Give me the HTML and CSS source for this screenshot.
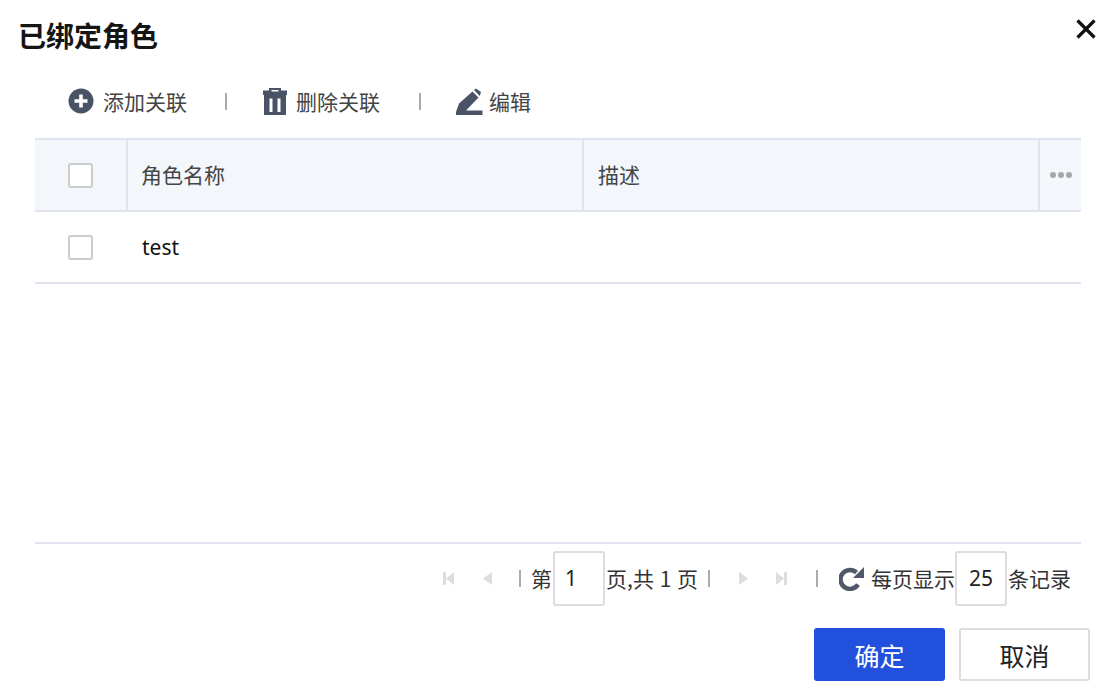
FILE: index.html
```
<!DOCTYPE html>
<html lang="zh">
<head>
<meta charset="utf-8">
<title>已绑定角色</title>
<link rel="stylesheet" href="styles.css">
</head>
<body>
<div class="dialog">
  <header class="head">
    <h1 class="title">已绑定角色</h1>
    <svg class="close" width="22" height="22" viewBox="0 0 22 22"><path d="M2.500 2.500L19.500 19.500M19.500 2.500L2.500 19.500" stroke="#111" stroke-width="3.200" fill="none"/></svg>
  </header>
  <div class="toolbar">
    <span class="tool tool-add">
      <svg width="26" height="26" viewBox="0 0 26 26"><circle cx="13" cy="13" r="12.500" fill="#4a5366"/><path d="M13 6.500V19.500M6.500 13H19.500" stroke="#fff" stroke-width="3.600"/></svg>
      <span>添加关联</span>
    </span>
    <i class="sep sep-a"></i>
    <span class="tool tool-del">
      <svg width="24" height="27" viewBox="0 0 24 27"><path fill-rule="evenodd" d="M6 0H18V2.500H24V7H0V2.500H6ZM8.500 2V3.500H15.500V2Z" fill="#4a5366"/><path fill-rule="evenodd" d="M1 7H23V27H1ZM6.500 10.500V24H9.500V10.500ZM14.500 10.500V24H17.500V10.500Z" fill="#4a5366"/></svg>
      <span>删除关联</span>
    </span>
    <i class="sep sep-b"></i>
    <span class="tool tool-edit">
      <svg width="28" height="27" viewBox="0 0 28 27"><path d="M1 24L4 15.500L17.500 3.500L23.500 9.500L11 22.500H27.500V27H1Z" fill="#4a5366"/><path d="M19 2L21 0.500L26 4L24.700 8Z" fill="#4a5366"/></svg>
      <span>编辑</span>
    </span>
  </div>
  <div class="table">
    <div class="row row-head">
      <div class="cell cell-check"><span class="check"></span></div>
      <div class="cell cell-name">角色名称</div>
      <div class="cell cell-desc">描述</div>
      <div class="cell cell-more"><span class="dot"></span><span class="dot"></span><span class="dot"></span></div>
    </div>
    <div class="row row-body">
      <div class="cell cell-check"><span class="check"></span></div>
      <div class="cell cell-name">test</div>
    </div>
  </div>
  <div class="pager">
    <svg class="pg pg-first" width="13" height="15" viewBox="0 0 13 15"><path d="M1 1H4V14H1ZM12 1V14L4 7.500Z" fill="#dcdde0"/></svg>
    <svg class="pg pg-prev" width="11" height="15" viewBox="0 0 11 15"><path d="M10 1V14L1 7.500Z" fill="#dcdde0"/></svg>
    <i class="sep pg-sep1"></i>
    <span class="lbl lbl-di">第</span>
    <span class="num num-page">1</span>
    <span class="lbl lbl-total">页,共 1 页</span>
    <i class="sep pg-sep2"></i>
    <svg class="pg pg-next" width="11" height="15" viewBox="0 0 11 15"><path d="M1 1V14L10 7.500Z" fill="#dcdde0"/></svg>
    <svg class="pg pg-last" width="13" height="15" viewBox="0 0 13 15"><path d="M9 1H12V14H9ZM1 1V14L9 7.500Z" fill="#dcdde0"/></svg>
    <i class="sep pg-sep3"></i>
    <svg class="pg pg-refresh" width="25" height="25" viewBox="0 0 25 25"><path d="M19 18.500A9.500 9.500 0 1 1 17.500 6.500" stroke="#4f5769" stroke-width="4.500" fill="none"/><path d="M25 1V12H14Z" fill="#4f5769"/></svg>
    <span class="lbl lbl-show">每页显示</span>
    <span class="num num-size">25</span>
    <span class="lbl">条记录</span>
  </div>
  <div class="actions">
    <button class="btn btn-ok">确定</button>
    <button class="btn btn-cancel">取消</button>
  </div>
</div>
</body>
</html>
```
FILE: styles.css
```
* { box-sizing: border-box; }
html, body { margin: 0; padding: 0; background: #fff; }
body {
  width: 1111px;
  height: 695px;
  overflow: hidden;
  font-family: "Noto Sans CJK SC", "Noto Sans", sans-serif;
  color: #222;
}
.dialog { width: 1111px; height: 695px; display: flex; flex-direction: column; }
.head { height: 71px; display: flex; justify-content: space-between; padding: 16px 14px 0 18px; }
.title { margin: 0; font-size: 28px; line-height: 38px; font-weight: 700; color: #151515; }
.close { margin-top: 2px; }
.toolbar { height: 67px; display: flex; align-items: center; padding: 0 0 7px 68px; font-size: 21px; color: #444; }
.tool { display: flex; align-items: center; gap: 9px; line-height: 30px; }
.tool-edit { gap: 6px; }
.sep { display: block; width: 2px; height: 17px; background: #aaa; flex: none; }
.sep-a { margin: 0 36px 0 38px; }
.sep-b { margin: 0 34px 0 39px; }
.table { margin: 0 30px 0 35px; }
.row { display: flex; }
.row-head { height: 74px; background: #f3f6fa; border-top: 2px solid #e1e4ee; border-bottom: 2px solid #e1e4ee; }
.row-body { height: 72px; border-bottom: 2px solid #e1e4ee; }
.cell { display: flex; align-items: center; font-size: 21px; color: #444; }
.cell-check { width: 93px; justify-content: center; padding-right: 3px; }
.row-head .cell-check { border-right: 2px solid #e1e4ee; padding-right: 1px; }
.row-head .cell-name, .row-head .cell-desc { padding-bottom: 2px; }
.cell-name { width: 456px; padding-left: 13px; border-right: 2px solid #e1e4ee; }
.row-body .cell-name { border-right: 0; color: #111; font-family: "Noto Sans", sans-serif; padding-left: 14px; }
.cell-desc { width: 456px; padding-left: 14px; border-right: 2px solid #e1e4ee; }
.cell-more { flex: 1; justify-content: center; gap: 2px; }
.dot { width: 6px; height: 6px; border-radius: 50%; background: #a8a8a8; }
.check { width: 25px; height: 25px; border: 2px solid #ccc; border-radius: 3px; background: #fff; }
.pager {
  margin: 258px 30px 0 35px;
  height: 75px;
  border-top: 2px solid #e1e4ee;
  display: flex;
  align-items: center;
  justify-content: flex-end;
  padding: 0 10px 5px 0;
  font-size: 21px;
  color: #333;
}
.pg { flex: none; }
.pg-prev { margin-left: 27px; }
.pg-sep1 { margin: 0 10px 0 26px; }
.lbl { line-height: 1; white-space: nowrap; }
.lbl-total { word-spacing: 1px; }
.num {
  width: 52px;
  height: 55px;
  border: 2px solid #ddd;
  border-radius: 3px;
  display: flex;
  align-items: center;
  justify-content: center;
  font-family: "Noto Sans", sans-serif;
  color: #222;
}
.num-page { padding-right: 16px; margin: 0 1px; }
.pg-sep2 { margin: 0 28px 0 10px; }
.pg-last { margin-left: 26px; }
.pg-sep3 { margin: 0 21px 0 28px; }
.lbl-show { margin-left: 7px; }
.num-size { margin-right: 1px; }
.actions { display: flex; justify-content: flex-end; gap: 14px; padding: 11px 21px 0 0; }
.btn { width: 131px; height: 53px; font-family: inherit; font-size: 25px; border-radius: 3px; padding: 0; }
.btn-ok { background: #2050dc; color: #fff; border: 0; }
.btn-cancel { background: #fff; color: #222; border: 2px solid #ddd; }
```
